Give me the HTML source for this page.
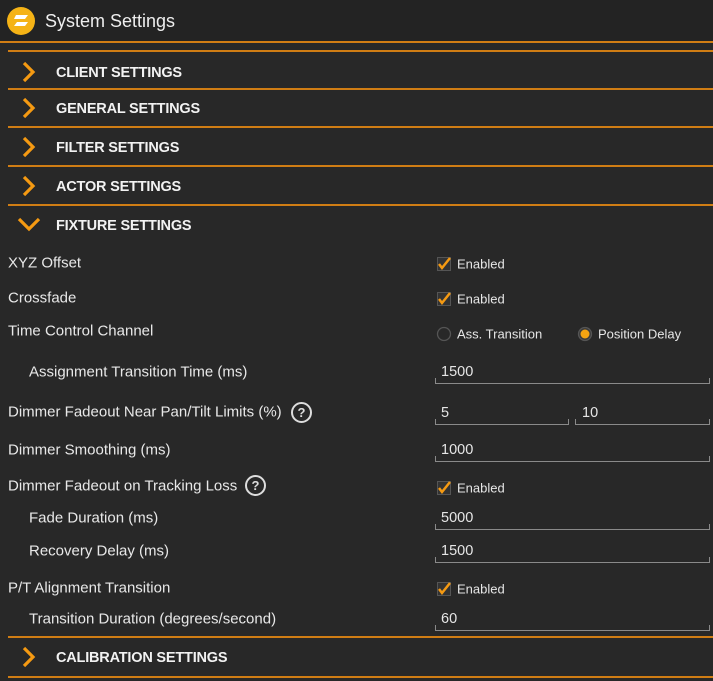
<!DOCTYPE html>
<html><head><meta charset="utf-8"><style>
body{margin:0;width:713px;height:681px;background:#282828;font-family:"Liberation Sans",sans-serif;color:#e6e6e6;position:relative;overflow:hidden}
.a{position:absolute;white-space:nowrap}
.hl{position:absolute;height:2px;background:#d07d14}
.sec{position:absolute;left:56px;font-weight:bold;font-size:14.5px;color:#f2f2f2;transform:translateY(-50%);letter-spacing:-0.2px}
.chev{position:absolute;left:20px}
.lab{position:absolute;font-size:15px;color:#e8e8e8;transform:translateY(-50%)}
.en{position:absolute;left:457px;font-size:13px;transform:translateY(-50%)}
.in{position:absolute;height:6px;border:1px solid #8a8a8a;border-top:none;box-sizing:border-box}
.val{position:absolute;font-size:14.5px;transform:translateY(-50%)}
.q{position:absolute;width:17px;height:17px;border:2px solid #ddd;border-radius:50%;font-size:13px;font-weight:bold;text-align:center;line-height:17px;color:#ddd}
</style></head><body>
<div class="a" style="left:0;top:0;width:713px;height:42px;background:#232323"></div>
<svg class="a" style="left:6px;top:6px" width="30" height="30" viewBox="0 0 30 30"><circle cx="15" cy="15" r="14" fill="#f5b316"/><path d="M10 9h12l-3 4H8z" fill="#fff"/><path d="M11 16h11l-3 4H8z" fill="#fff"/></svg>
<div class="a" style="left:45px;top:11px;font-size:18px;color:#eee">System Settings</div>
<div class="hl" style="left:0;top:41px;width:713px"></div>
<div class="hl" style="left:8px;top:50px;width:705px"></div>
<div class="hl" style="left:8px;top:88px;width:705px"></div>
<div class="hl" style="left:8px;top:126px;width:705px"></div>
<div class="hl" style="left:8px;top:165px;width:705px"></div>
<div class="hl" style="left:8px;top:204px;width:705px"></div>
<div class="hl" style="left:8px;top:636px;width:705px"></div>
<div class="hl" style="left:8px;top:676px;width:705px"></div>

<svg class="chev" style="top:61px" width="18" height="22"><path d="M4 2l9 9-9 9" stroke="#f59a12" stroke-width="3.2" fill="none"/></svg>
<div class="sec" style="top:73px">CLIENT SETTINGS</div>
<svg class="chev" style="top:97px" width="18" height="22"><path d="M4 2l9 9-9 9" stroke="#f59a12" stroke-width="3.2" fill="none"/></svg>
<div class="sec" style="top:109px">GENERAL SETTINGS</div>
<svg class="chev" style="top:136px" width="18" height="22"><path d="M4 2l9 9-9 9" stroke="#f59a12" stroke-width="3.2" fill="none"/></svg>
<div class="sec" style="top:148px">FILTER SETTINGS</div>
<svg class="chev" style="top:175px" width="18" height="22"><path d="M4 2l9 9-9 9" stroke="#f59a12" stroke-width="3.2" fill="none"/></svg>
<div class="sec" style="top:187px">ACTOR SETTINGS</div>
<svg class="chev" style="left:16px;top:216px" width="26" height="16"><path d="M3 3l10 10 10-10" stroke="#f59a12" stroke-width="3.2" fill="none"/></svg>
<div class="sec" style="top:226px">FIXTURE SETTINGS</div>
<svg class="chev" style="top:646px" width="18" height="22"><path d="M4 2l9 9-9 9" stroke="#f59a12" stroke-width="3.2" fill="none"/></svg>
<div class="sec" style="top:658px">CALIBRATION SETTINGS</div>

<div class="lab" style="left:8px;top:263px">XYZ Offset</div>
<div class="lab" style="left:8px;top:298px">Crossfade</div>
<div class="lab" style="left:8px;top:331px">Time Control Channel</div>
<div class="lab" style="left:29px;top:372px">Assignment Transition Time (ms)</div>
<div class="lab" style="left:8px;top:412px">Dimmer Fadeout Near Pan/Tilt Limits (%)</div>
<div class="q" style="left:291px;top:402px">?</div>
<div class="lab" style="left:8px;top:450px">Dimmer Smoothing (ms)</div>
<div class="lab" style="left:8px;top:486px">Dimmer Fadeout on Tracking Loss</div>
<div class="q" style="left:245px;top:475px">?</div>
<div class="lab" style="left:29px;top:518px">Fade Duration (ms)</div>
<div class="lab" style="left:29px;top:551px">Recovery Delay (ms)</div>
<div class="lab" style="left:8px;top:588px">P/T Alignment Transition</div>
<div class="lab" style="left:29px;top:619px">Transition Duration (degrees/second)</div>

<svg class="a" style="left:437px;top:257px" width="16" height="14"><rect x="0.5" y="0.5" width="13" height="13" fill="#333" stroke="#555"/><path d="M2 7l3 4 8-10" stroke="#f59a12" stroke-width="2.5" fill="none"/></svg>
<div class="en" style="top:264px">Enabled</div>
<svg class="a" style="left:437px;top:292px" width="16" height="14"><rect x="0.5" y="0.5" width="13" height="13" fill="#333" stroke="#555"/><path d="M2 7l3 4 8-10" stroke="#f59a12" stroke-width="2.5" fill="none"/></svg>
<div class="en" style="top:299px">Enabled</div>
<svg class="a" style="left:437px;top:481px" width="16" height="14"><rect x="0.5" y="0.5" width="13" height="13" fill="#333" stroke="#555"/><path d="M2 7l3 4 8-10" stroke="#f59a12" stroke-width="2.5" fill="none"/></svg>
<div class="en" style="top:488px">Enabled</div>
<svg class="a" style="left:437px;top:582px" width="16" height="14"><rect x="0.5" y="0.5" width="13" height="13" fill="#333" stroke="#555"/><path d="M2 7l3 4 8-10" stroke="#f59a12" stroke-width="2.5" fill="none"/></svg>
<div class="en" style="top:589px">Enabled</div>

<svg class="a" style="left:436px;top:326px" width="16" height="16"><circle cx="8" cy="8" r="6.5" fill="none" stroke="#555" stroke-width="1.3"/></svg>
<div class="en" style="top:334px">Ass. Transition</div>
<svg class="a" style="left:577px;top:326px" width="16" height="16"><circle cx="8" cy="8" r="6.5" fill="#3a3a3a" stroke="#555" stroke-width="1.3"/><circle cx="8" cy="8" r="4.5" fill="#f5a412"/></svg>
<div class="en" style="left:598px;top:334px">Position Delay</div>

<div class="val" style="left:441px;top:372px">1500</div><div class="in" style="left:435px;top:378px;width:275px"></div>
<div class="val" style="left:441px;top:413px">5</div><div class="in" style="left:435px;top:419px;width:134px"></div>
<div class="val" style="left:582px;top:413px">10</div><div class="in" style="left:575px;top:419px;width:135px"></div>
<div class="val" style="left:441px;top:450px">1000</div><div class="in" style="left:435px;top:456px;width:275px"></div>
<div class="val" style="left:441px;top:518px">5000</div><div class="in" style="left:435px;top:524px;width:275px"></div>
<div class="val" style="left:441px;top:551px">1500</div><div class="in" style="left:435px;top:557px;width:275px"></div>
<div class="val" style="left:441px;top:619px">60</div><div class="in" style="left:435px;top:625px;width:275px"></div>
</body></html>
